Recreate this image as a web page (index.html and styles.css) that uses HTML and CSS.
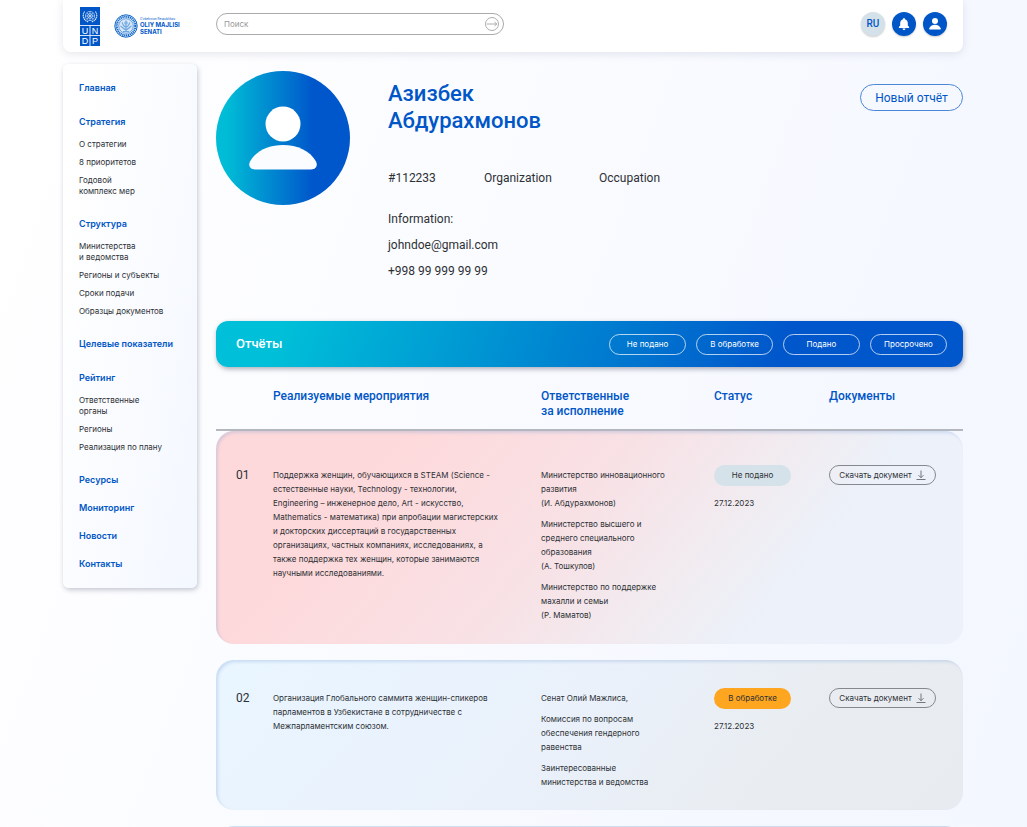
FILE: index.html
```html
<!DOCTYPE html>
<html lang="ru">
<head>
<meta charset="utf-8">
<meta name="viewport" content="width=device-width, initial-scale=1">
<title>Отчёты</title>
<link rel="stylesheet" href="styles.css">
</head>
<body>
<div class="page">
  <header class="topbar">
    <div class="logos">
      <svg class="undp" viewBox="0 0 20 39" role="img" aria-label="UNDP">
        <rect width="20" height="39" fill="#0056c7"/>
        <g fill="none" stroke="#fff" stroke-width=".6" opacity=".85">
          <circle cx="10" cy="9" r="4.600"/><circle cx="10" cy="9" r="2.500"/>
          <path d="M5.400 9h9.200M10 4.400v9.200M6.800 5.800l6.400 6.400M13.200 5.800l-6.400 6.400"/>
          <path d="M4.600 4.500C2 8 3 13 8.500 15M15.400 4.500C18 8 17 13 11.500 15" stroke-width="1.200" stroke-dasharray="1.400 .5"/>
          <path d="M0 18.500h20M0 28.500h20M10 18.500V39" stroke-width="1"/>
        </g>
        <g class="undp-letters"><text x="5" y="27">U</text><text x="15" y="27">N</text><text x="5" y="37">D</text><text x="15" y="37">P</text></g>
      </svg>
      <div class="senate">
        <svg class="seal" viewBox="0 0 24 24" aria-hidden="true">
          <circle cx="12" cy="12" r="11.200" fill="#dcebfa" stroke="#1468c8"/>
          <circle cx="12" cy="12" r="9.300" fill="none" stroke="#1468c8" stroke-width="2" stroke-dasharray="1.200 .7"/>
          <circle cx="12" cy="12" r="7.300" fill="#d6e7f8" stroke="#3c85d4" stroke-width=".7"/>
          <path d="M12 6.500v11M8 8.500c1 3 2 4 4 5 2-1 3-2 4-5M6.500 12c2 1 3 3 5.500 4 2.500-1 3.500-3 5.500-4M9 17.500h6" fill="none" stroke="#6ea6e0" stroke-width="1.100"/>
          <circle cx="12" cy="9" r="1.800" fill="#7fb1e5"/>
        </svg>
        <div class="senate-text"><span class="senate-top">O‘zbekiston Respublikasi</span><strong>OLIY MAJLISI<br>SENATI</strong></div>
      </div>
    </div>
    <form class="search">
      <input type="text" placeholder="Поиск" aria-label="Поиск">
      <button type="button" aria-label="Найти"><svg viewBox="0 0 14 14"><circle cx="7" cy="7" r="6.500"/><path d="M1.800 7h10M9.500 5l2.300 2-2.300 2"/></svg></button>
    </form>
    <div class="tools">
      <button type="button" class="round lang">RU</button>
      <button type="button" class="round" aria-label="Уведомления"><svg viewBox="0 0 24 24"><path d="M12 6.300c.7 0 1.200.5 1.200 1.100 1.700.5 2.600 1.900 2.600 3.700v2.500l1.300 1.400v.9H6.900V15l1.300-1.400v-2.500c0-1.800.9-3.200 2.600-3.700 0-.6.5-1.100 1.200-1.100zM10.500 16.400h3c0 .9-.6 1.500-1.500 1.500s-1.500-.6-1.500-1.500z"/></svg></button>
      <button type="button" class="round" aria-label="Профиль"><svg viewBox="0 0 24 24"><circle cx="12" cy="9" r="3"/><path d="M7 17.400c-.7 0-1-.4-.8-1 .7-2.300 3-3.700 5.800-3.700s5.100 1.400 5.800 3.700c.2.600-.1 1-.8 1z"/></svg></button>
    </div>
  </header>
  <div class="layout">
    <nav class="sidebar" aria-label="Разделы">
      <div class="group"><a class="section" href="#">Главная</a></div>
      <div class="group"><a class="section" href="#">Стратегия</a>
        <ul><li><a href="#">О стратегии</a></li><li><a href="#">8 приоритетов</a></li><li><a href="#">Годовой<br>комплекс мер</a></li></ul></div>
      <div class="group"><a class="section" href="#">Структура</a>
        <ul><li><a href="#">Министерства<br>и ведомства</a></li><li><a href="#">Регионы и субъекты</a></li><li><a href="#">Сроки подачи</a></li><li><a href="#">Образцы документов</a></li></ul></div>
      <div class="group"><a class="section" href="#">Целевые показатели</a></div>
      <div class="group"><a class="section" href="#">Рейтинг</a>
        <ul><li><a href="#">Ответственные<br>органы</a></li><li><a href="#">Регионы</a></li><li><a href="#">Реализация по плану</a></li></ul></div>
      <div class="group links"><a class="section" href="#">Ресурсы</a><a class="section" href="#">Мониторинг</a><a class="section" href="#">Новости</a><a class="section" href="#">Контакты</a></div>
    </nav>
    <main class="content">
      <section class="profile">
        <svg class="avatar" viewBox="0 0 134 134" aria-hidden="true">
          <defs><linearGradient id="avatar-fill"><stop offset=".08" stop-color="#00bcd6"/><stop offset=".73" stop-color="#0056cb"/></linearGradient></defs>
          <circle cx="67" cy="67" r="67" fill="url(#avatar-fill)"/>
          <circle cx="67" cy="53" r="17.500" fill="#fff"/>
          <path d="M39 98.500c-5 0-7-4-5-8C40 79.500 53 74 67 74s27 5.500 33 16.500c2 4 0 8-5 8z" fill="#fbfcff"/>
        </svg>
        <div class="person">
          <h1>Азизбек<br>Абдурахмонов</h1>
          <div class="meta"><span>#112233</span><span>Organization</span><span>Occupation</span></div>
          <div class="contacts"><span>Information:</span><span>johndoe@gmail.com</span><span>+998 99 999 99 99</span></div>
        </div>
        <button type="button" class="new-report">Новый отчёт</button>
      </section>
      <section class="reports">
        <div class="reports-bar">
          <h2>Отчёты</h2>
          <div class="filters"><button type="button">Не подано</button><button type="button">В обработке</button><button type="button">Подано</button><button type="button">Просрочено</button></div>
        </div>
        <table>
          <thead><tr><th aria-label="Номер"></th><th>Реализуемые мероприятия</th><th>Ответственные<br>за исполнение</th><th>Статус</th><th>Документы</th></tr></thead>
          <tbody>
            <tr class="overdue">
              <td class="number">01</td>
              <td>Поддержка женщин, обучающихся в STEAM (Science -<br>естественные науки, Technology - технологии,<br>Engineering – инженерное дело, Art - искусство,<br>Mathematics - математика) при апробации магистерских<br>и докторских диссертаций в государственных<br>организациях, частных компаниях, исследованиях, а<br>также поддержка тех женщин, которые занимаются<br>научными исследованиями.</td>
              <td><p>Министерство инновационного<br>развития<br>(И. Абдурахмонов)</p><p>Министерство высшего и<br>среднего специального<br>образования<br>(А. Тошкулов)</p><p>Министерство по поддержке<br>махалли и семьи<br>(Р. Маматов)</p></td>
              <td><span class="status">Не подано</span><time datetime="2023-12-27">27.12.2023</time></td>
              <td><button type="button" class="download">Скачать документ <svg viewBox="0 0 10 10"><path d="M5 .5v7M2.500 5.200L5 7.700l2.500-2.500M.5 9.500h9"/></svg></button></td>
            </tr>
            <tr class="processing">
              <td class="number">02</td>
              <td>Организация Глобального саммита женщин-спикеров<br>парламентов в Узбекистане в сотрудничестве с<br>Межпарламентским союзом.</td>
              <td><p>Сенат Олий Мажлиса,</p><p>Комиссия по вопросам<br>обеспечения гендерного<br>равенства</p><p>Заинтересованные<br>министерства и ведомства</p></td>
              <td><span class="status active">В обработке</span><time datetime="2023-12-27">27.12.2023</time></td>
              <td><button type="button" class="download">Скачать документ <svg viewBox="0 0 10 10"><path d="M5 .5v7M2.500 5.200L5 7.700l2.500-2.500M.5 9.500h9"/></svg></button></td>
            </tr>
            <tr class="processing"><td></td><td></td><td></td><td></td><td></td></tr>
          </tbody>
        </table>
      </section>
    </main>
  </div>
</div>
</body>
</html>
```
FILE: styles.css
```css
:root {
  --blue: #0056c7;
  --ink: #2d3035;
  --display: Roboto, "Noto Sans", sans-serif;
}
* { box-sizing: border-box; }
body {
  margin: 0;
  font-family: Inter, "Noto Sans", sans-serif;
  font-size: 8px;
  line-height: 14px;
  color: var(--ink);
}
.page {
  height: 100vh;
  overflow-y: auto;
  scrollbar-width: none;
  padding: 0 64px 0 63px;
  background: linear-gradient(110deg, #fff 0%, #fbfcff 35%, #f5f8ff 75%, #f3f7ff 100%);
}
button { font: inherit; color: inherit; padding: 0; cursor: pointer; white-space: nowrap; }
a { color: inherit; text-decoration: none; }
h1, h2, p, ul { margin: 0; padding: 0; }
ul { list-style: none; }

.topbar {
  display: flex;
  align-items: center;
  height: 52px;
  padding: 0 16px 4px;
  background: #fff;
  border-radius: 0 0 8px 8px;
  box-shadow: 0 2px 8px rgba(50, 60, 90, .12);
}
.logos { display: flex; align-items: center; gap: 14px; width: 137px; padding-top: 4px; }
.undp { width: 20px; height: 39px; margin-left: 1px; }
.undp-letters { fill: #fff; font: 9px "Liberation Sans", sans-serif; text-anchor: middle; }
.senate { display: flex; align-items: center; gap: 2px; }
.seal { width: 24px; height: 24px; }
.senate-text { color: var(--blue); font-size: 6px; line-height: 7px; white-space: nowrap; }
.senate-text strong { display: block; }
.senate-top { display: block; font-size: 3px; line-height: 4px; }
.search {
  display: flex;
  align-items: center;
  width: 288px;
  height: 22px;
  padding: 0 4px 0 7px;
  border: 1px solid #aaa;
  border-radius: 11px;
  background: #fff;
}
.search input { flex: 1; min-width: 0; border: 0; padding: 0; outline: 0; background: none; font: inherit; }
.search input::placeholder { color: #999; }
.search button { width: 14px; height: 14px; border: 0; background: none; }
.search svg { display: block; fill: none; stroke: #999; stroke-width: .8; }
.tools { display: flex; gap: 7px; margin-left: auto; }
.round { width: 24px; height: 24px; border: 0; border-radius: 50%; background: var(--blue); box-shadow: 0 1px 2px rgba(0, 0, 0, .2); }
.round svg { display: block; fill: #fff; }
.lang { background: #d5e1e9; color: var(--blue); font-family: var(--display); font-size: 10px; font-weight: 500; }

.layout { display: flex; align-items: flex-start; gap: 19px; padding-top: 12px; }
.sidebar {
  display: flex;
  flex-direction: column;
  gap: 20px;
  flex: 0 0 134px;
  padding: 17px 16px;
  border-radius: 6px;
  background: linear-gradient(100deg, #fff 10%, #f3f7ff);
  box-shadow: 1px 2px 5px rgba(30, 40, 70, .25);
  white-space: nowrap;
}
.group { display: flex; flex-direction: column; gap: 10px; }
.group ul { display: flex; flex-direction: column; gap: 7px; line-height: 11px; }
.group li a { display: block; }
.links { gap: 14px; }
.section { color: var(--blue); font-size: 9px; font-weight: 600; line-height: 14px; }

.content { flex: 1; min-width: 0; }
.profile { display: flex; align-items: flex-start; padding-top: 7px; }
.avatar { flex: 0 0 134px; height: 134px; }
.person { padding: 9px 0 0 38px; font-family: var(--display); font-size: 12px; line-height: 16px; }
h1 { color: var(--blue); font-size: 22px; font-weight: 500; line-height: 27px; }
.meta { display: grid; grid-template-columns: 96px 115px auto; margin-top: 36px; }
.contacts { display: grid; gap: 10px; margin: 25px 0 42px; }
.new-report {
  width: 103px;
  height: 27px;
  margin: 13px 0 0 auto;
  border: 1px solid #4c86d6;
  border-radius: 14px;
  background: none;
  color: var(--blue);
  font-family: var(--display);
  font-size: 12px;
}

.reports-bar {
  display: flex;
  align-items: center;
  justify-content: space-between;
  height: 46px;
  padding: 0 16px 0 20px;
  border-radius: 12px;
  background: linear-gradient(110deg, #00bfd8 9%, #0056cb 76%);
  box-shadow: 1px 2px 5px rgba(20, 20, 50, .35);
  color: #fff;
}
h2 { font-family: var(--display); font-size: 13px; font-weight: 500; }
.filters { display: flex; gap: 10px; }
.filters button { width: 77px; height: 21px; border: 1px solid rgba(255, 255, 255, .7); border-radius: 11px; background: none; }

table, thead { display: block; }
tbody { display: grid; gap: 16px; }
tr {
  display: grid;
  grid-template-columns: 37px 268fr 173fr 115fr 134fr;
  padding-left: 20px;
}
th, td { padding: 0; text-align: left; white-space: nowrap; min-width: 0; }
thead tr { padding-top: 22px; padding-bottom: 10px; border-bottom: 2px solid #b5b7bf; }
th { color: var(--blue); font-family: var(--display); font-size: 12px; font-weight: 500; line-height: 15px; }
tbody tr {
  padding-top: 31px;
  padding-bottom: 21px;
  border-radius: 18px;
  box-shadow: inset 2px 2px 3px rgba(110, 150, 210, .25);
}
.overdue {
  padding-top: 37px;
  padding-bottom: 22px;
  background: linear-gradient(130deg, #fed9db 20%, #f8e1e5 46%, #f0edf2 66%, #ecf1fa 76%);
}
.processing { background: linear-gradient(130deg, #e9f5ff 5%, #eaf1fb 45%, #e9edf1 75%, #e8ebef); }
.number { font-family: var(--display); font-size: 12px; }
td p + p { margin-top: 7px; }
.status {
  display: block;
  width: 77px;
  height: 21px;
  margin: -3px 0 10px;
  border-radius: 11px;
  background: #d5e2ea;
  line-height: 21px;
  text-align: center;
}
.active { background: #ffa621; }
time { display: block; }
.download {
  display: flex;
  align-items: center;
  justify-content: center;
  gap: 4px;
  width: 107px;
  height: 20px;
  margin-top: -3px;
  border: 1px solid #85888f;
  border-radius: 10px;
  background: none;
}
.download svg { width: 10px; height: 10px; fill: none; stroke: #55585f; stroke-width: .8; }
```
